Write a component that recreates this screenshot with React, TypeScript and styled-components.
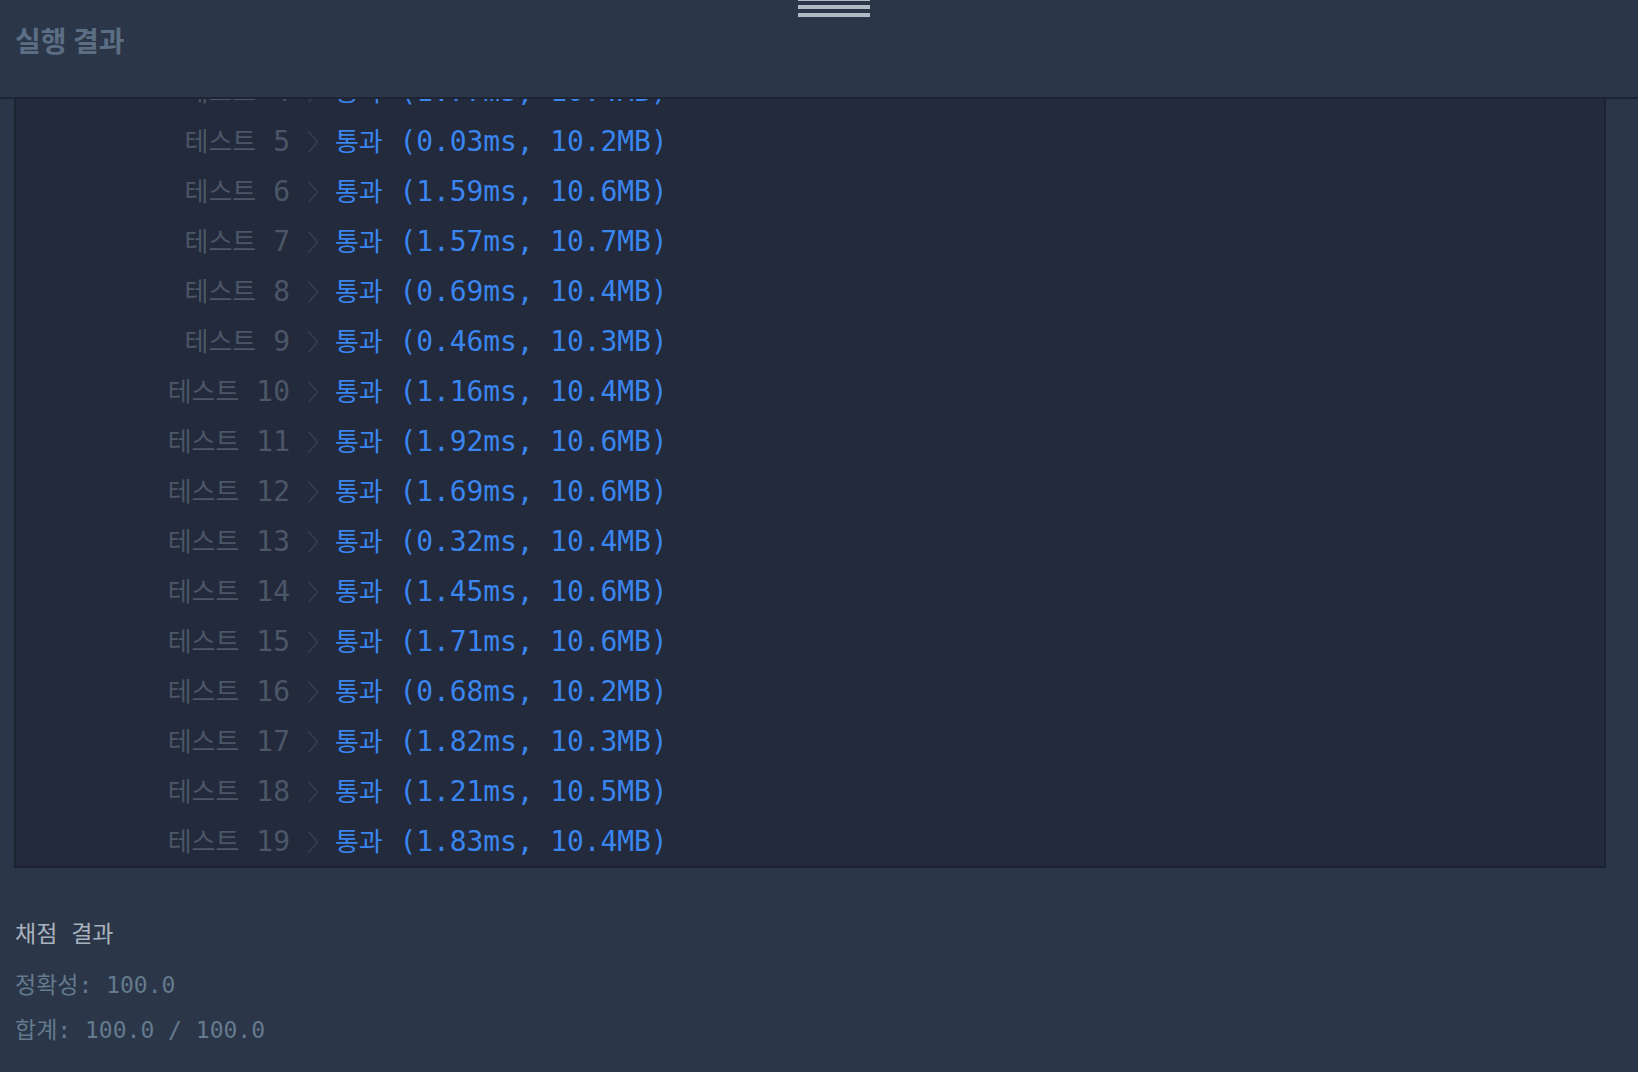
import React from 'react';
import styled, { createGlobalStyle } from 'styled-components';

type TestResult = {
  number: number;
  time: string;
  memory: string;
};

// the list is scrolled: test 4 sits half under the header
const results: TestResult[] = [
  { number: 4, time: '1.77ms', memory: '10.4MB' },
  { number: 5, time: '0.03ms', memory: '10.2MB' },
  { number: 6, time: '1.59ms', memory: '10.6MB' },
  { number: 7, time: '1.57ms', memory: '10.7MB' },
  { number: 8, time: '0.69ms', memory: '10.4MB' },
  { number: 9, time: '0.46ms', memory: '10.3MB' },
  { number: 10, time: '1.16ms', memory: '10.4MB' },
  { number: 11, time: '1.92ms', memory: '10.6MB' },
  { number: 12, time: '1.69ms', memory: '10.6MB' },
  { number: 13, time: '0.32ms', memory: '10.4MB' },
  { number: 14, time: '1.45ms', memory: '10.6MB' },
  { number: 15, time: '1.71ms', memory: '10.6MB' },
  { number: 16, time: '0.68ms', memory: '10.2MB' },
  { number: 17, time: '1.82ms', memory: '10.3MB' },
  { number: 18, time: '1.21ms', memory: '10.5MB' },
  { number: 19, time: '1.83ms', memory: '10.4MB' },
];

const Chevron: React.FC = () => (
  <ChevronIcon width="12" height="24" viewBox="0 0 12 24">
    <polyline points="1.5,1.5 10.5,12 1.5,22.5" fill="none" stroke="currentColor" strokeWidth="1.6" />
  </ChevronIcon>
);

const App: React.FC = () => {
  return (
    <>
      <GlobalStyle />
      <Page>
        <Header>
          <Handle>
            <HandleBar />
            <HandleBar />
            <HandleBar />
          </Handle>
          <Title>실행 결과</Title>
        </Header>
        <Body>
          <OutputBox>
            {results.map(({ number, time, memory }) => (
              <Row key={number}>
                <Label>
                  <Hangul>테스트</Hangul> {number}
                </Label>
                <Chevron />
                <Passed>
                  <Hangul>통과</Hangul> ({time}, {memory})
                </Passed>
              </Row>
            ))}
          </OutputBox>
          <Summary>
            <SummaryTitle>채점 결과</SummaryTitle>
            <SummaryLine>정확성: 100.0</SummaryLine>
            <SummaryLine>합계: 100.0 / 100.0</SummaryLine>
          </Summary>
        </Body>
      </Page>
    </>
  );
};

const GlobalStyle = createGlobalStyle`
  html, body {
    margin: 0;
    padding: 0;
    background: #2b3648;
    overflow: hidden;
  }
  * {
    box-sizing: border-box;
  }
`;

const Page = styled.div`
  height: 1072px;
  display: flex;
  flex-direction: column;
  background: #2b3648;
  font-family: "DejaVu Sans Mono", "Noto Sans CJK KR", monospace;
`;

const Header = styled.header`
  position: relative;
  flex: 0 0 99px;
  padding: 20px 15px 0;
  border-bottom: 2px solid #1d2433;
  background: #2b3648;
`;

const Handle = styled.div`
  position: absolute;
  top: -3px;
  left: 798px;
  width: 72px;
  display: flex;
  flex-direction: column;
  gap: 4px;
`;

const HandleBar = styled.div`
  height: 4px;
  background: #b1bbc5;
`;

const Title = styled.h1`
  margin: 0;
  font-family: "Noto Sans CJK KR", "Noto Sans", sans-serif;
  font-weight: 700;
  font-size: 28px;
  line-height: 40px;
  color: #5c6e83;
`;

const Body = styled.main`
  flex: 1;
  display: flex;
  flex-direction: column;
  padding: 0 32px 0 14px;
  min-height: 0;
`;

const OutputBox = styled.section`
  height: 769px;
  display: flex;
  flex-direction: column;
  justify-content: flex-end;
  overflow: hidden;
  background: #222a3b;
  border: 2px solid #1c2331;
  border-top: none;
`;

const Row = styled.div`
  flex: 0 0 50px;
  height: 50px;
  min-height: 0;
  display: flex;
  align-items: center;
  padding-top: 2px;
  font-size: 28px;
  line-height: 48px;
  white-space: pre;
`;

const Label = styled.div`
  width: 274px;
  text-align: right;
  color: #4b5667;
`;

const Hangul = styled.span`
  font-family: "Noto Sans CJK KR", sans-serif;
  font-size: 26px;
  line-height: 1;
`;

const ChevronIcon = styled.svg`
  margin: 0 16px 0 17px;
  color: #353f50;
  flex-shrink: 0;
`;

const Passed = styled.div`
  color: #3a85ef;
  letter-spacing: -0.1px;
`;

const Summary = styled.section`
  padding: 44px 1px 0;
`;

const SummaryTitle = styled.h2`
  margin: 0 0 7px;
  font-size: 23px;
  font-weight: 400;
  line-height: 44px;
  color: #a8b2bd;
`;

const SummaryLine = styled.div`
  font-size: 23px;
  line-height: 45px;
  color: #647a8e;
`;

export default App;
